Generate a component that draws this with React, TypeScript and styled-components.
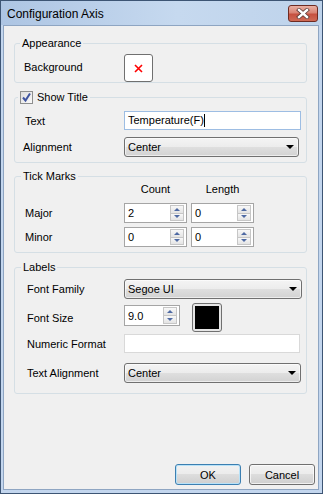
import React from "react";
import styled, { createGlobalStyle } from "styled-components";

const GlobalStyle = createGlobalStyle`
  html, body {
    margin: 0;
    padding: 0;
    background: #c3d6ee;
  }
  body {
    font-family: "Liberation Sans", Arial, sans-serif;
    font-size: 11px;
    color: #000;
  }
`;

const Window = styled.div`
  width: 323px;
  height: 494px;
  box-sizing: border-box;
  border: 1px solid #3d5574;
  background: #c3d6ee;
  display: flex;
  flex-direction: column;
`;

const TitleBar = styled.div`
  height: 24px;
  flex-shrink: 0;
  display: flex;
  justify-content: space-between;
  align-items: flex-start;
  background: linear-gradient(to right, #adc5e3 0%, #c6d9ef 55%, #bed3eb 100%);
`;

const Title = styled.div`
  font-size: 12px;
  line-height: 15px;
  padding: 6px 0 0 6px;
`;

const CloseButton = styled.div`
  width: 30px;
  height: 17px;
  box-sizing: border-box;
  margin: 4px 4px 0 0;
  border: 1px solid #6e2b22;
  border-radius: 3px;
  background: linear-gradient(#eab0a3 0%, #d98474 45%, #c65140 55%, #cf6a55 100%);
  display: flex;
  align-items: center;
  justify-content: center;
`;

const Frame = styled.div`
  flex: 1;
  display: flex;
  padding: 0 3px 3px 2px;
`;

const Client = styled.div`
  flex: 1;
  background: #f0f0f0;
  border: 1px solid #8ea5c2;
  display: flex;
  flex-direction: column;
  padding: 10px 3px 4px 10px;
`;

const Group = styled.fieldset<{ $mt: number; $pb: number }>`
  margin: ${(p) => p.$mt}px 8px 0 0;
  padding: 0 0 ${(p) => p.$pb}px 0;
  border: 1px solid #d5dfe5;
  border-radius: 3px;
  min-width: 0;
`;

const Legend = styled.legend<{ $ml: number }>`
  margin-left: ${(p) => p.$ml}px;
  padding: 0 2px;
  height: 14px;
  line-height: 14px;
  display: flex;
  align-items: center;
  gap: 4px;
`;

const Row = styled.div<{ $mt: number; $h: number }>`
  display: flex;
  align-items: center;
  height: ${(p) => p.$h}px;
  margin-top: ${(p) => p.$mt}px;
`;

const Label = styled.div<{ $indent: number; $dy?: number }>`
  width: 109px;
  flex-shrink: 0;
  box-sizing: border-box;
  padding-left: ${(p) => p.$indent}px;
  margin-top: ${(p) => p.$dy ?? 0}px;
`;

const ColHead = styled.div`
  width: 63px;
  text-align: center;
  line-height: 14px;
  & + & {
    margin-left: 4px;
  }
`;

const TextBox = styled.div<{ $w: number; $focus?: boolean }>`
  width: ${(p) => p.$w}px;
  height: 19px;
  box-sizing: border-box;
  border: 1px solid ${(p) => (p.$focus ? "#9dbde3" : "#d9d9d9")};
  background: #fff;
  padding-left: 3px;
  line-height: 17px;
  display: flex;
  align-items: center;
`;

const Caret = styled.span`
  width: 1px;
  height: 13px;
  background: #000;
`;

const Combo = styled.div<{ $w: number }>`
  width: ${(p) => p.$w}px;
  height: 20px;
  box-sizing: border-box;
  border: 1px solid #707070;
  border-radius: 3px;
  background: linear-gradient(#f4f4f4 0%, #ececec 50%, #dfdfdf 50%, #d2d2d2 100%);
  display: flex;
  align-items: center;
  justify-content: space-between;
  padding: 0 4px 0 3px;
  box-shadow: inset 0 0 0 1px rgba(255, 255, 255, 0.6);
`;

const Arrow = styled.span`
  width: 0;
  height: 0;
  border-left: 4px solid transparent;
  border-right: 4px solid transparent;
  border-top: 4px solid #000;
`;

const Spin = styled.div<{ $w: number; $h: number; $ml: number; $mt: number }>`
  width: ${(p) => p.$w}px;
  height: ${(p) => p.$h}px;
  margin-left: ${(p) => p.$ml}px;
  margin-top: ${(p) => p.$mt}px;
  box-sizing: border-box;
  border: 1px solid #a5a5a5;
  background: #fff;
  display: flex;
  align-self: flex-start;
`;

const SpinValue = styled.div`
  flex: 1;
  padding-left: 3px;
  display: flex;
  align-items: center;
`;

const SpinButtons = styled.div`
  width: 14px;
  display: flex;
  flex-direction: column;
  padding: 1px 2px 1px 0;
`;

const SpinBtn = styled.div<{ $down?: boolean }>`
  flex: 1;
  border: 1px solid #c6c6c6;
  ${(p) => (p.$down ? "border-top: none;" : "")}
  background: linear-gradient(#f8f8f8, #e4e4e4);
  display: flex;
  align-items: center;
  justify-content: center;
`;

const SpinArrow = styled.span<{ $down?: boolean }>`
  width: 0;
  height: 0;
  border-left: 3px solid transparent;
  border-right: 3px solid transparent;
  ${(p) =>
    p.$down ? "border-top: 3px solid #4f6aa3;" : "border-bottom: 3px solid #4f6aa3;"}
`;

const Swatch = styled.div<{ $w: number; $h: number; $ml?: number; $fill?: boolean }>`
  width: ${(p) => p.$w}px;
  height: ${(p) => p.$h}px;
  margin-left: ${(p) => p.$ml ?? 0}px;
  box-sizing: border-box;
  border: 1px solid #707070;
  border-radius: 3px;
  padding: 2px;
  background: ${(p) => (p.$fill ? "#e6e6e6" : "#fff")};
  display: flex;
  align-items: center;
  justify-content: center;
`;

const SwatchFill = styled.div<{ $color: string }>`
  flex: 1;
  align-self: stretch;
  background: ${(p) => p.$color};
`;

const CheckBox = styled.div`
  width: 13px;
  height: 13px;
  box-sizing: border-box;
  border: 1px solid #8e8f8f;
  background: linear-gradient(135deg, #dedede, #fafafa);
  display: flex;
  align-items: center;
  justify-content: center;
`;

const Spacer = styled.div`
  flex: 1;
`;

const ButtonRow = styled.div`
  display: flex;
  justify-content: flex-end;
  gap: 8px;
`;

const DlgButton = styled.button<{ $default?: boolean }>`
  width: 66px;
  height: 21px;
  box-sizing: border-box;
  padding: 0;
  border: 1px solid ${(p) => (p.$default ? "#3c7fb1" : "#707070")};
  border-radius: 3px;
  background: linear-gradient(#f2f2f2 0%, #ebebeb 50%, #dddddd 50%, #cfcfcf 100%);
  box-shadow: inset 0 0 0 1px ${(p) => (p.$default ? "#b8e2f8" : "rgba(255,255,255,0.7)")};
  font-family: "Liberation Sans", Arial, sans-serif;
  font-size: 11px;
  color: #000;
`;

function Spinner({
  value,
  w,
  h = 20,
  ml = 0,
  mt = 0,
}: {
  value: string;
  w: number;
  h?: number;
  ml?: number;
  mt?: number;
}) {
  return (
    <Spin $w={w} $h={h} $ml={ml} $mt={mt}>
      <SpinValue>{value}</SpinValue>
      <SpinButtons>
        <SpinBtn>
          <SpinArrow />
        </SpinBtn>
        <SpinBtn $down>
          <SpinArrow $down />
        </SpinBtn>
      </SpinButtons>
    </Spin>
  );
}

function DropDown({ value, w }: { value: string; w: number }) {
  return (
    <Combo $w={w}>
      <span>{value}</span>
      <Arrow />
    </Combo>
  );
}

function App() {
  return (
    <>
      <GlobalStyle />
      <Window>
        <TitleBar>
          <Title>Configuration Axis</Title>
          <CloseButton>
            <svg width="14" height="11" viewBox="0 0 14 11">
              <path d="M3 2 L11 9 M11 2 L3 9" stroke="#5a3a36" strokeWidth="4" strokeLinecap="square" />
              <path d="M3 2 L11 9 M11 2 L3 9" stroke="#fff" strokeWidth="2.4" strokeLinecap="square" />
            </svg>
          </CloseButton>
        </TitleBar>
        <Frame>
          <Client>
            <Group $mt={0} $pb={0}>
              <Legend $ml={5}>Appearance</Legend>
              <Row $mt={4} $h={28}>
                <Label $indent={9} $dy={-3}>Background</Label>
                <Swatch $w={29} $h={28}>
                  <svg width="9" height="9" viewBox="0 0 9 9">
                    <path d="M1 1 L8 8 M8 1 L1 8" stroke="#f00" strokeWidth="1.6" />
                  </svg>
                </Swatch>
              </Row>
            </Group>

            <Group $mt={7} $pb={5}>
              <Legend $ml={3}>
                <CheckBox>
                  <svg width="11" height="11" viewBox="0 0 11 11">
                    <path d="M2 5.5 L4.5 8.5 L9 1.5" stroke="#3f54a0" strokeWidth="2" fill="none" />
                  </svg>
                </CheckBox>
                Show Title
              </Legend>
              <Row $mt={7} $h={19}>
                <Label $indent={10}>Text</Label>
                <TextBox $w={177} $focus>
                  Temperature(F)
                  <Caret />
                </TextBox>
              </Row>
              <Row $mt={7} $h={20}>
                <Label $indent={8}>Alignment</Label>
                <DropDown value="Center" w={175} />
              </Row>
            </Group>

            <Group $mt={6} $pb={5}>
              <Legend $ml={6}>Tick Marks</Legend>
              <Row $mt={-1} $h={14}>
                <Label $indent={10} />
                <ColHead>Count</ColHead>
                <ColHead>Length</ColHead>
              </Row>
              <Row $mt={7} $h={20}>
                <Label $indent={10}>Major</Label>
                <Spinner value="2" w={63} />
                <Spinner value="0" w={63} ml={4} />
              </Row>
              <Row $mt={4} $h={20}>
                <Label $indent={10}>Minor</Label>
                <Spinner value="0" w={63} />
                <Spinner value="0" w={63} ml={4} />
              </Row>
            </Group>

            <Group $mt={7} $pb={10}>
              <Legend $ml={6}>Labels</Legend>
              <Row $mt={5} $h={20}>
                <Label $indent={12}>Font Family</Label>
                <DropDown value="Segoe UI" w={178} />
              </Row>
              <Row $mt={4} $h={29}>
                <Label $indent={12}>Font Size</Label>
                <Spinner value="9.0" w={56} h={21} mt={2} />
                <Swatch $w={30} $h={29} $ml={12} $fill>
                  <SwatchFill $color="#000" />
                </Swatch>
              </Row>
              <Row $mt={2} $h={19}>
                <Label $indent={12}>Numeric Format</Label>
                <TextBox $w={176} />
              </Row>
              <Row $mt={10} $h={20}>
                <Label $indent={12}>Text Alignment</Label>
                <DropDown value="Center" w={177} />
              </Row>
            </Group>

            <Spacer />
            <ButtonRow>
              <DlgButton $default>OK</DlgButton>
              <DlgButton>Cancel</DlgButton>
            </ButtonRow>
          </Client>
        </Frame>
      </Window>
    </>
  );
}

export default App;
